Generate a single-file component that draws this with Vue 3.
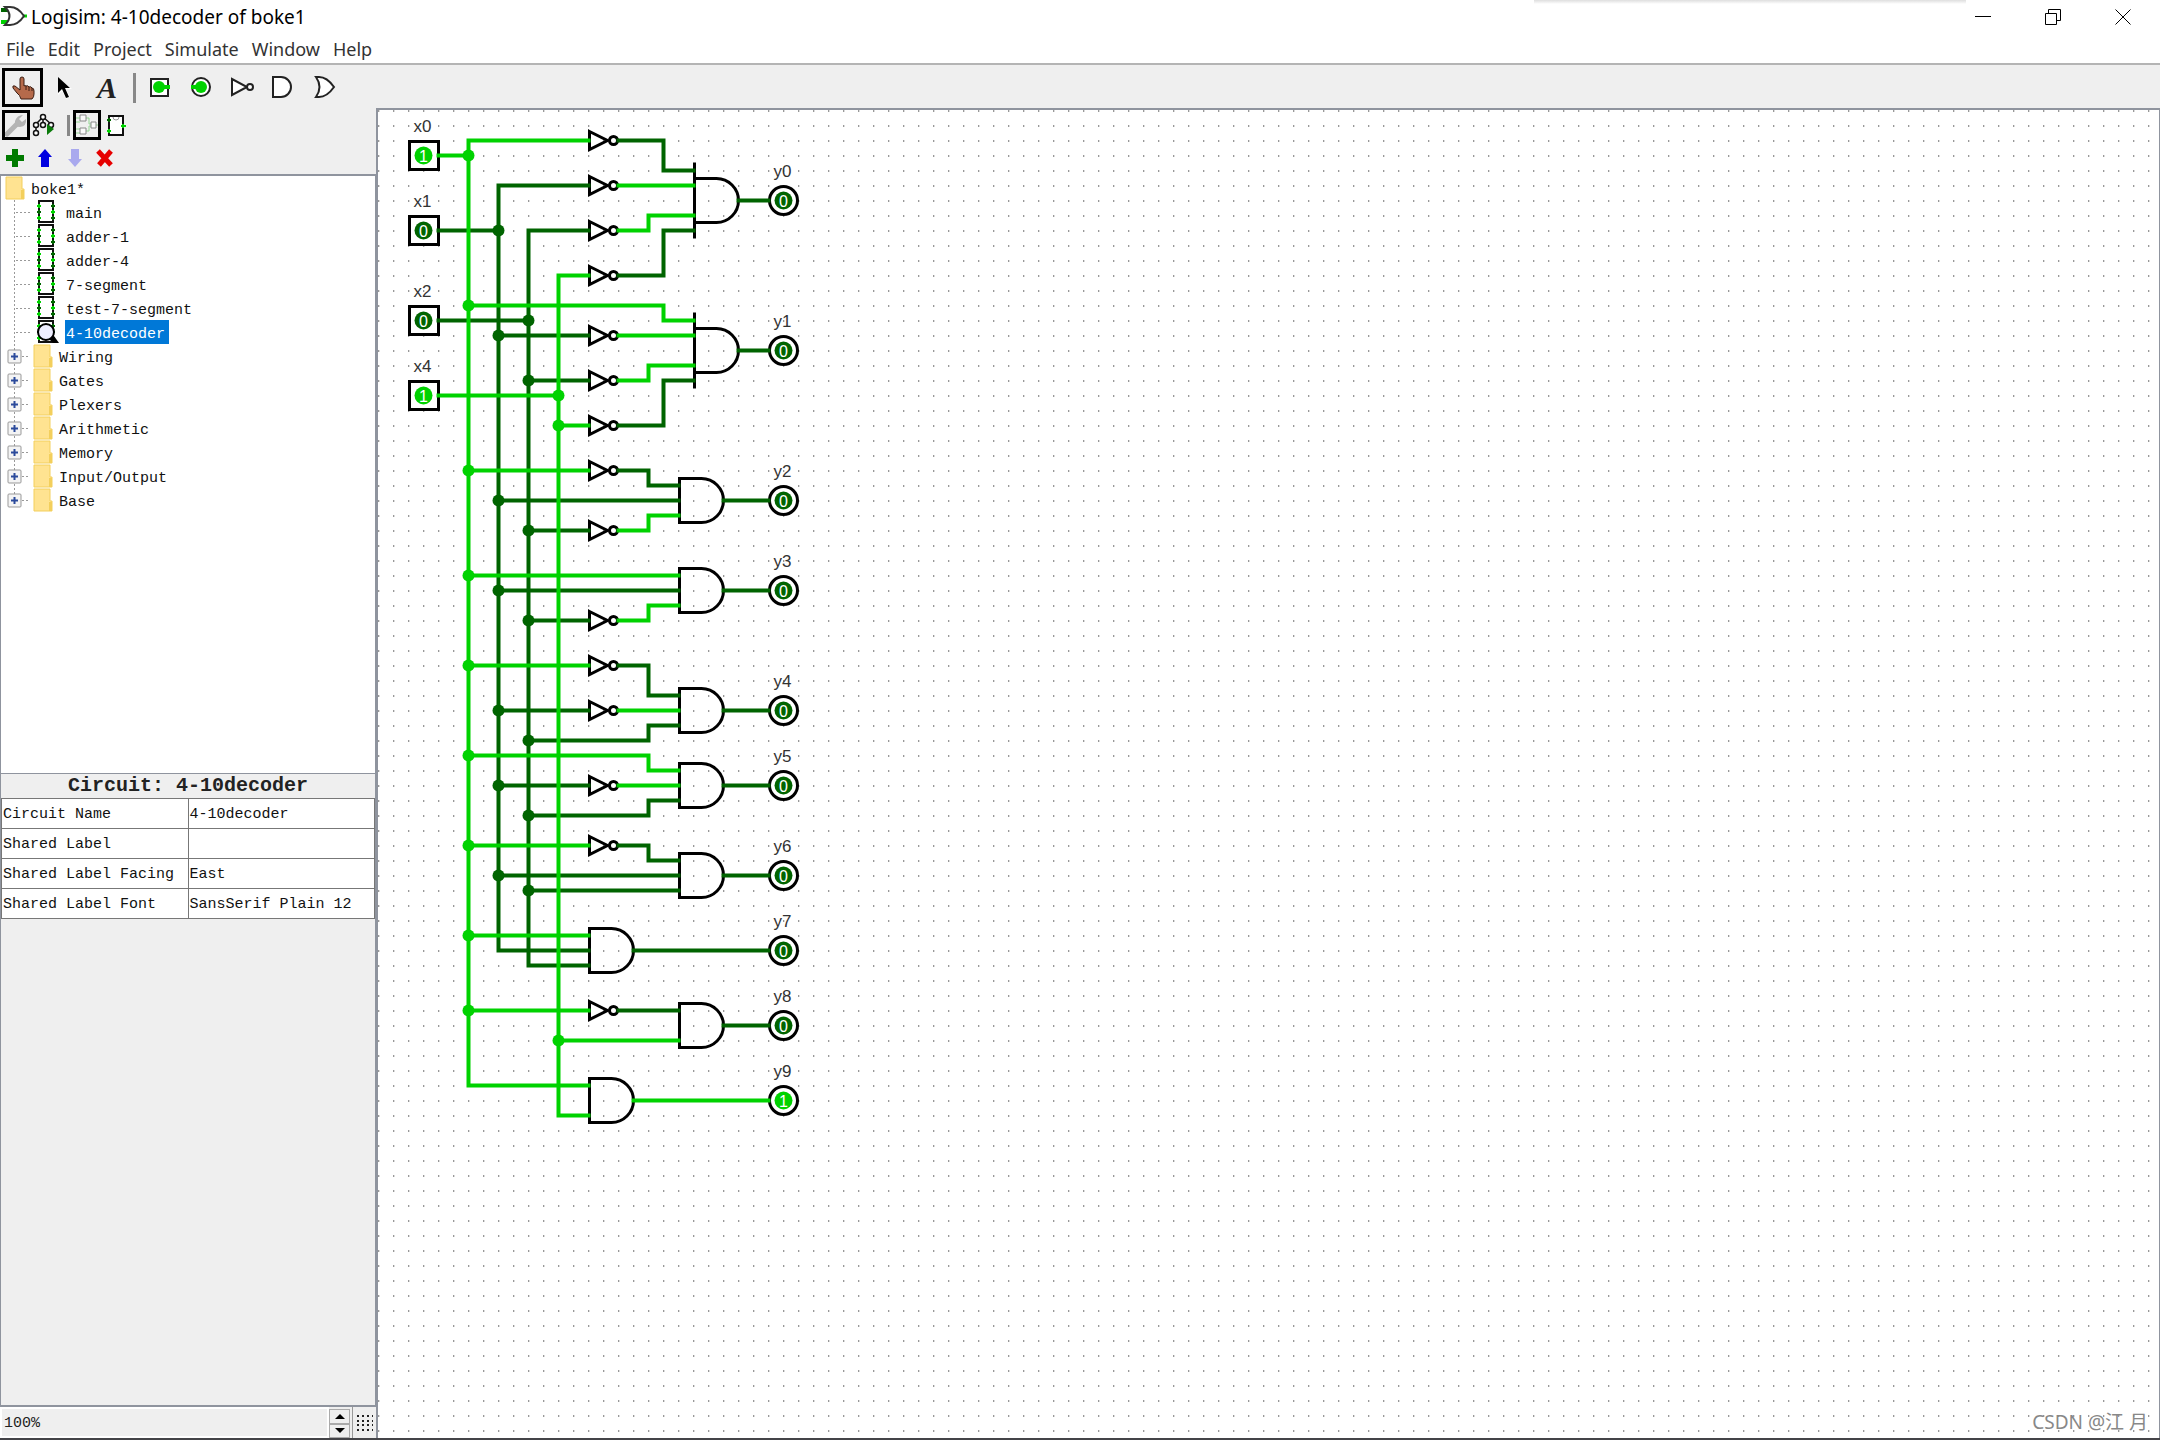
<script setup>
import { ref } from 'vue'

const menus = ['File', 'Edit', 'Project', 'Simulate', 'Window', 'Help']
const circuits = ['main', 'adder-1', 'adder-4', '7-segment', 'test-7-segment', '4-10decoder']
const libraries = ['Wiring', 'Gates', 'Plexers', 'Arithmetic', 'Memory', 'Input/Output', 'Base']
const current = '4-10decoder'
const attributes = [
  ['Circuit Name', '4-10decoder'],
  ['Shared Label', ''],
  ['Shared Label Facing', 'East'],
  ['Shared Label Font', 'SansSerif Plain 12'],
]
const zoom = ref('100%')

// Grid cell to canvas pixel
const CELL = 15
const gx = (c) => c * CELL + 15.5
const gy = (r) => r * CELL + 0.5

const inputs = [
  { label: 'x0', c: 2, r: 3, on: 1 },
  { label: 'x1', c: 2, r: 8, on: 0 },
  { label: 'x2', c: 2, r: 14, on: 0 },
  { label: 'x4', c: 2, r: 19, on: 1 },
]
const outputs = [6, 16, 26, 32, 40, 45, 51, 56, 61, 66].map((r, i) => ({
  label: 'y' + i, c: 26, r, on: i === 9 ? 1 : 0,
}))
const notRows = [2, 5, 8, 11, 15, 18, 21, 24, 28, 34, 37, 40, 45, 49, 60]
const andGates = [
  [20, 6, true], [20, 16, true], [19, 26], [19, 32], [19, 40],
  [19, 45], [19, 51], [13, 56], [19, 61], [13, 66],
]

// Each wire is a list of column, row pairs
const lowWires = [
  [3, 8, 7, 8], [3, 14, 9, 14],
  [13, 5, 7, 5, 7, 56, 13, 56], [13, 8, 9, 8, 9, 57, 13, 57],
  [15, 2, 18, 2, 18, 4, 20, 4], [15, 11, 18, 11, 18, 8, 20, 8], [23, 6, 25, 6],
  [7, 15, 13, 15], [9, 18, 13, 18], [15, 21, 18, 21, 18, 18, 20, 18], [23, 16, 25, 16],
  [15, 24, 17, 24, 17, 25, 19, 25], [7, 26, 19, 26], [9, 28, 13, 28], [22, 26, 25, 26],
  [7, 32, 19, 32], [9, 34, 13, 34], [22, 32, 25, 32],
  [15, 37, 17, 37, 17, 39, 19, 39], [7, 40, 13, 40], [9, 42, 17, 42, 17, 41, 19, 41], [22, 40, 25, 40],
  [7, 45, 13, 45], [9, 47, 17, 47, 17, 46, 19, 46], [22, 45, 25, 45],
  [15, 49, 17, 49, 17, 50, 19, 50], [7, 51, 19, 51], [9, 52, 19, 52], [22, 51, 25, 51],
  [16, 56, 25, 56], [15, 60, 19, 60], [22, 61, 25, 61],
]
const highWires = [
  [3, 3, 5, 3], [3, 19, 11, 19],
  [13, 2, 5, 2, 5, 65, 13, 65], [13, 11, 11, 11, 11, 67, 13, 67],
  [15, 5, 20, 5], [15, 8, 17, 8, 17, 7, 20, 7],
  [5, 13, 18, 13, 18, 14, 20, 14], [15, 15, 20, 15], [15, 18, 17, 18, 17, 17, 20, 17], [11, 21, 13, 21],
  [5, 24, 13, 24], [15, 28, 17, 28, 17, 27, 19, 27],
  [5, 31, 19, 31], [15, 34, 17, 34, 17, 33, 19, 33],
  [5, 37, 13, 37], [15, 40, 19, 40],
  [5, 43, 17, 43, 17, 44, 19, 44], [15, 45, 19, 45],
  [5, 49, 13, 49], [5, 55, 13, 55], [5, 60, 13, 60], [11, 62, 19, 62], [16, 66, 25, 66],
]
const points = (w) => {
  const out = []
  for (let i = 0; i < w.length; i += 2) out.push(gx(w[i]) + ',' + gy(w[i + 1]))
  return out.join(' ')
}
const lowJoints = [
  ...[8, 15, 26, 32, 40, 45, 51].map((r) => [7, r]),
  ...[14, 18, 28, 34, 42, 47, 52].map((r) => [9, r]),
]
const highJoints = [
  ...[3, 13, 24, 31, 37, 43, 49, 55, 60].map((r) => [5, r]),
  ...[19, 21, 62].map((r) => [11, r]),
]
</script>

<template>
  <div class="window">
    <header class="titlebar">
      <svg class="logo" width="26" height="24" viewBox="0 0 26 24">
        <path d="M0 5h9" stroke="#006400" stroke-width="4" /><path d="M0 17h9" stroke="#00d200" stroke-width="4" />
        <path d="M21 11h5" stroke="#00d200" stroke-width="3" />
        <path d="M4 2h5q8 0 14 9q-6 9-14 9H4q9-9 0-18z" fill="#fff" stroke="#333" stroke-width="2" />
      </svg>
      <h1>Logisim: 4-10decoder of boke1</h1>
      <div class="edge-shadow"></div>
      <div class="controls">
        <button aria-label="Minimize"><svg width="16" height="16"><path d="M0 7.5h16" class="thin" /></svg></button>
        <button aria-label="Restore"><svg width="16" height="16"><path d="M.5 4.5h11v11H.5zM3.500 4.500V.5h12v11h-4" class="thin" /></svg></button>
        <button aria-label="Close"><svg width="16" height="16"><path d="M.5.5l15 15M15.500.5l-15 15" class="thin" /></svg></button>
      </div>
    </header>

    <nav class="menubar">
      <button v-for="m in menus" :key="m">{{ m }}</button>
    </nav>

    <div class="toolbar">
      <button class="tool picked" aria-label="Poke">
        <svg width="24" height="24" viewBox="0 0 24 24">
          <path d="M9 14V3q0-2 2-2t2 2v7q1-1 2 0q2-1 3 1q2-1 3 1q2 0 2 3v3q0 3-2 5H10q-1-4-4-6l-4-5q-1-3 2-2z" fill="#b56a4b" stroke="#3a1d12" stroke-width="1" />
          <path d="M15 10v4M18 11v4M21 12v3" stroke="#3a1d12" stroke-width="1" fill="none" />
        </svg>
      </button>
      <button class="tool" aria-label="Select">
        <svg width="24" height="24" viewBox="0 0 24 24">
          <path d="M6 2v17l4-4l4 8l4-2l-4-8h6z" fill="#fff" /><path d="M6 1v16l4-4l4 9l3-1l-4-9h5z" fill="#000" />
        </svg>
      </button>
      <button class="tool letter" aria-label="Text">A</button>
      <span class="bar tall"></span>
      <button class="tool" aria-label="Input pin">
        <svg width="24" height="24" viewBox="0 0 24 24"><rect x="3" y="3" width="17" height="17" fill="#fff" stroke="#222" stroke-width="2" /><circle cx="11" cy="11" r="6" fill="#00d200" /><path d="M12 11h10" stroke="#00d200" stroke-width="4" /></svg>
      </button>
      <button class="tool" aria-label="Output pin">
        <svg width="24" height="24" viewBox="0 0 24 24"><circle cx="12" cy="11" r="9" fill="#fff" stroke="#222" stroke-width="2" /><circle cx="12" cy="11" r="6" fill="#00d200" /><path d="M2 11h9" stroke="#00d200" stroke-width="4" /></svg>
      </button>
      <button class="tool" aria-label="NOT gate">
        <svg width="24" height="24" viewBox="0 0 24 24"><path d="M2 3v16l15-8z" fill="#fff" stroke="#222" stroke-width="2" /><circle cx="20" cy="11" r="3" fill="#fff" stroke="#222" stroke-width="2" /></svg>
      </button>
      <button class="tool" aria-label="AND gate">
        <svg width="24" height="24" viewBox="0 0 24 24"><path d="M2 1h8a10 10 0 0 1 0 20H2z" fill="#fff" stroke="#222" stroke-width="2" /></svg>
      </button>
      <button class="tool" aria-label="OR gate">
        <svg width="24" height="24" viewBox="0 0 24 24"><path d="M4 1h3q8 0 15 10q-7 10-15 10H4q7-10 0-20z" fill="#fff" stroke="#222" stroke-width="2" /></svg>
      </button>
    </div>

    <div class="body">
      <aside class="side">
        <div class="mini views">
          <button class="view picked" aria-label="Circuit list">
            <svg width="22" height="24" viewBox="0 0 22 24"><path d="M2 21l10-10" stroke="#b4b4b4" stroke-width="5" stroke-linecap="round" /><path d="M18 2l-4 4l3 3l4-3q1 7-6 8q-6 0-5-6q2-6 8-6z" fill="#b4b4b4" /></svg>
          </button>
          <button class="view" aria-label="Simulation tree">
            <svg width="24" height="24" viewBox="0 0 24 24" fill="none" stroke="#111" stroke-width="1.500">
              <path d="M11 4L4 11M11 4l8 7M11 5v7M4 12v8M11 4" /><g fill="#fff"><circle cx="11" cy="4" r="2.500" /><circle cx="4" cy="12" r="2.500" /><circle cx="11" cy="12" r="2.500" /><circle cx="19" cy="12" r="2.500" /><circle cx="4" cy="20" r="2.500" /></g><path d="M15 11v11l7-6z" fill="#0a7a0a" stroke="none" />
            </svg>
          </button>
          <span class="bar"></span>
          <button class="view picked" aria-label="Edit layout">
            <svg width="22" height="24" viewBox="0 0 22 24" fill="none" stroke-width="1">
              <path d="M0 5h4M10 5h3v6h3M10 18h3v-5h3M20 12h2M0 16h4M0 20h4M0 9h4" stroke="#93d693" /><path d="M4 2h6v6H4zM4 15h6v6H4zM15 9h5v6h-5z" stroke="#888" fill="#fafafa" />
            </svg>
          </button>
          <button class="view" aria-label="Edit appearance">
            <svg width="22" height="24" viewBox="0 0 22 24"><rect x="5" y="3" width="14" height="19" fill="#fff" stroke="#111" stroke-width="2" /><path d="M9 4q0 3 3 3t3-3" fill="none" stroke="#999" /><path d="M3 7h4M5 5v4" stroke="#006400" stroke-width="2" /><path d="M3 18h4M5 16v4M17 13h5M19 11v4" stroke="#00d200" stroke-width="2" /></svg>
          </button>
        </div>

        <div class="mini edits">
          <button aria-label="Add circuit"><svg width="18" height="18"><path d="M6 0h6v6h6v6h-6v6H6v-6H0V6h6z" fill="#007a00" /></svg></button>
          <button aria-label="Move up"><svg width="18" height="18"><path d="M9 0l7 8h-3v10H5V8H2z" fill="#0000e0" /></svg></button>
          <button aria-label="Move down"><svg width="18" height="18"><path d="M9 18l7-8h-3V0H5v10H2z" fill="#a9a9ee" /></svg></button>
          <button aria-label="Remove circuit"><svg width="18" height="18"><path d="M2 2l13 14M15 2L3 16" stroke="#e60000" stroke-width="5" /></svg></button>
        </div>

        <div class="tree">
          <div class="row root">
            <svg class="folder" width="20" height="24" viewBox="0 0 20 24"><path d="M1 1h16v12h2v10H1z" fill="#ffe391" stroke="#f3cf5c" /><path d="M16 14h3v9h-3z" fill="#f3cf5c" /></svg>
            <span class="name">boke1*</span>
          </div>
          <ul>
            <li v-for="c in circuits" :key="c" class="row">
              <svg class="branch" width="30" height="24" viewBox="0 0 30 24"><path d="M12.500 0v24M14 12.500h14" class="dots" /></svg>
              <svg class="chip" width="24" height="24" viewBox="0 0 24 24">
                <rect x="4" y="1" width="14" height="21" fill="#fff" stroke="#111" stroke-width="2" />
                <path d="M2 6h4M4 4v4M2 18h4M4 16v4M16 12h4M18 10v4" stroke="#00d200" stroke-width="2" />
                <path d="M2 12h4M4 10v4M16 6h4M18 4v4M16 18h4M18 16v4" stroke="#006400" stroke-width="2" />
                <g v-if="c === current"><path d="M16 16h3l5 7h-6l-4-4z" fill="#000" /><circle cx="11" cy="12" r="8" fill="#eef" stroke="#000" stroke-width="2" /></g>
              </svg>
              <span class="name circuit" :class="{ selected: c === current }">{{ c }}</span>
            </li>
            <li v-for="(l, i) in libraries" :key="l" class="row">
              <button class="branch" :aria-label="'Expand ' + l">
                <svg width="30" height="24" viewBox="0 0 30 24">
                  <path :d="i === libraries.length - 1 ? 'M12.500 0v6M20 12.500h8' : 'M12.500 0v24M20 12.500h8'" class="dots" />
                  <rect x="6" y="6" width="13" height="13" rx="1" fill="#f4f4f4" stroke="#999" stroke-width="1" />
                  <path d="M9 12.500h7M12.500 9v7" stroke="#2b4a9b" stroke-width="2" />
                </svg>
              </button>
              <svg class="folder" width="20" height="24" viewBox="0 0 20 24"><path d="M1 1h16v12h2v10H1z" fill="#ffe391" stroke="#f3cf5c" /><path d="M16 14h3v9h-3z" fill="#f3cf5c" /></svg>
              <span class="name">{{ l }}</span>
            </li>
          </ul>
        </div>

        <section class="attributes">
          <h2>Circuit: 4-10decoder</h2>
          <table>
            <tbody>
              <tr v-for="a in attributes" :key="a[0]">
                <th scope="row">{{ a[0] }}</th>
                <td>{{ a[1] }}</td>
              </tr>
            </tbody>
          </table>
        </section>

        <div class="zoom">
          <input v-model="zoom" type="text" aria-label="Zoom">
          <div class="spin">
            <button aria-label="Zoom in"><svg width="10" height="5"><path d="M0 5l5-5l5 5z" /></svg></button>
            <button aria-label="Zoom out"><svg width="10" height="5"><path d="M0 0l5 5l5-5z" /></svg></button>
          </div>
          <button class="grip" aria-label="Show grid">
            <svg width="18" height="18"><path d="M1 2h16M1 7h16M1 11h16M1 16h16" stroke="#222" stroke-width="2" stroke-dasharray="2 3" /></svg>
          </button>
        </div>
      </aside>

      <main class="canvas">
        <svg class="drawing" width="100%" height="100%">
          <defs>
            <pattern id="grid" width="15" height="15" patternUnits="userSpaceOnUse">
              <rect x="0" y="0" width="1" height="2" fill="#999" /><rect x="1" y="0" width="1" height="2" fill="#ddd" />
            </pattern>
          </defs>
          <rect width="100%" height="100%" fill="url(#grid)" />

          <g class="gate">
            <path v-for="r in notRows" :key="r" :d="`M${gx(13) + 1} ${gy(r) - 9}l18 9l-18 9z`" />
            <circle v-for="r in notRows" :key="'b' + r" :cx="gx(13) + 25" :cy="gy(r)" r="4" />
            <path v-for="g in andGates" :key="'a' + g[1]" :d="`M${gx(g[0]) + 1} ${gy(g[1]) - 22}h22a22 22 0 0 1 0 44h-22z`" />
            <path v-for="g in andGates.filter((a) => a[2])" :key="'e' + g[1]" :d="`M${gx(g[0]) + 1} ${gy(g[1]) - 38}v76`" />
            <rect v-for="p in inputs" :key="p.label" :x="gx(p.c) - 14" :y="gy(p.r) - 14" width="29" height="28" />
            <circle v-for="p in outputs" :key="p.label" :cx="gx(p.c)" :cy="gy(p.r)" r="14" />
          </g>

          <g class="low">
            <polyline v-for="(w, i) in lowWires" :key="i" :points="points(w)" />
            <circle v-for="(j, i) in lowJoints" :key="'j' + i" :cx="gx(j[0])" :cy="gy(j[1])" r="6" />
          </g>
          <g class="high">
            <polyline v-for="(w, i) in highWires" :key="i" :points="points(w)" />
            <circle v-for="(j, i) in highJoints" :key="'j' + i" :cx="gx(j[0])" :cy="gy(j[1])" r="6" />
          </g>

          <g v-for="p in [...inputs, ...outputs]" :key="p.label" :class="p.on ? 'high' : 'low'">
            <circle :cx="gx(p.c)" :cy="gy(p.r)" r="9" />
            <text class="value" :x="gx(p.c)" :y="gy(p.r) + 6">{{ p.on }}</text>
            <text class="label" :x="gx(p.c) - 1" :y="gy(p.r) - 24">{{ p.label }}</text>
          </g>
        </svg>
        <span class="mark">CSDN @江 月</span>
      </main>
    </div>
    <div class="taskedge"></div>
  </div>
</template>

<style>
body { margin: 0; background: #efefef; }
</style>

<style scoped>
.window { display: flex; flex-direction: column; min-height: 100vh; background: #efefef; font-family: "Liberation Mono", monospace; color: #111; }
button { padding: 0; border: 0; background: none; color: inherit; font: inherit; }
svg { display: block; }

.titlebar { position: relative; display: flex; align-items: center; height: 34px; background: #fff; padding: 0 2px 0 1px; }
h1 { margin: 0 auto 0 4px; font: 400 19px/34px "Noto Sans", sans-serif; color: #000; }
.edge-shadow { position: absolute; top: 0; right: 9%; width: 20%; height: 4px; background: linear-gradient(#dedede, #fff); }
.controls { display: flex; }
.controls button { width: 70px; height: 34px; display: flex; align-items: center; justify-content: center; }
.thin { fill: none; stroke: #000; stroke-width: 1; }

.menubar { display: flex; gap: 13px; height: 29px; padding-left: 6px; background: #fff; border-bottom: 2px solid #b4b4b4; }
.menubar button { font: 18px/28px "Noto Sans", sans-serif; color: #333; }

.toolbar { display: flex; align-items: center; height: 43px; padding: 2px 0 0 2px; box-sizing: border-box; }
.tool { display: flex; align-items: center; justify-content: center; width: 41px; height: 39px; box-sizing: border-box; }
.tool.picked, .view.picked { border: 3px solid #000; }
.letter { font: italic 700 30px/38px "Liberation Serif", serif; width: 46px; color: #222; }
.bar { width: 3px; height: 21px; background: #888; margin: 0 3px 0 9px; }
.bar.tall { height: 30px; margin: 0 3px; }

.body { display: flex; flex: 1; }
.side { display: flex; flex-direction: column; flex: 0 0 376px; }
.mini { display: flex; align-items: center; }
.views { height: 34px; padding-left: 2px; }
.view { display: flex; align-items: center; justify-content: center; width: 28px; height: 30px; box-sizing: border-box; }
.edits { height: 32px; padding-left: 6px; gap: 12px; }

.tree { flex: 599 1 0; box-sizing: border-box; background: #fff; border: 2px solid #8f949e; border-width: 2px 1px 1px; font-size: 15px; }
ul { list-style: none; margin: 0; padding: 0; }
.row { display: flex; height: 24px; padding-left: 1px; }
.root { padding-left: 3px; }
.name { line-height: 30px; margin-left: 6px; height: 24px; }
.circuit { padding: 0 4px 0 1px; }
.selected { background: #0078d7; color: #fff; }
.chip { margin-left: 3px; }
.folder { margin-left: 1px; }
.dots { fill: none; stroke: #999; stroke-width: 1; stroke-dasharray: 2 2; }

.attributes { flex: 634 1 0; border: 1px solid #8f949e; border-width: 0 1px 2px; }
h2 { margin: 0; font: 700 20px/24px "Liberation Mono", monospace; text-align: center; color: #222; }
table { width: 100%; table-layout: fixed; border-collapse: collapse; background: #fff; font-size: 15px; }
th, td { height: 30px; box-sizing: border-box; padding: 4px 1px 0; border: 1px solid #777; text-align: left; font-weight: 400; line-height: 24px; }

.zoom { display: flex; height: 31px; box-sizing: border-box; }
.zoom input { flex: 1; min-width: 0; margin: 0; padding: 2px 2px 0; border: 2px solid #fff; background: #efefef; font: 15px "Liberation Mono", monospace; color: #222; }
.spin { display: flex; flex-direction: column; width: 24px; padding: 2px 2px 0 0; border-right: 1px solid #999; box-sizing: border-box; }
.spin button { flex: 1; display: flex; align-items: center; justify-content: center; border: 1px solid #aaa; }
.grip { width: 23px; display: flex; align-items: center; justify-content: center; }

.canvas { position: relative; display: grid; flex: 1; min-width: 0; background: #fff; border: 2px solid #8f949e; border-width: 2px 1px 0 2px; }
.drawing { grid-area: 1 / 1; }
.gate { fill: none; stroke: #000; stroke-width: 3; }
polyline { fill: none; stroke-width: 4; stroke-linecap: square; }
.low polyline { stroke: #006400; }
.low circle { fill: #006400; }
.high polyline { stroke: #00d200; }
.high circle { fill: #00d200; }
.value { font: 16px "Liberation Sans", sans-serif; fill: #fff; text-anchor: middle; }
.label { font: 17px "Liberation Sans", sans-serif; fill: #333; text-anchor: middle; }
.mark { position: absolute; right: 11px; bottom: 2px; font: 19px/28px "Noto Sans", "Noto Sans CJK SC", sans-serif; color: #888; }
.taskedge { height: 2px; background: #444448; }
</style>
